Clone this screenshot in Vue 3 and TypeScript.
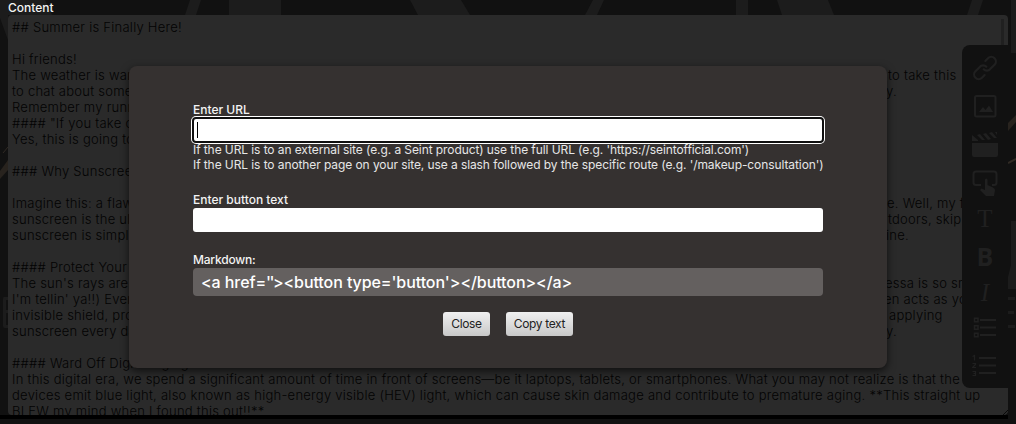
<script setup lang="ts">
interface Row { text: string; tail?: string; at?: number }

const rows: Row[] = [
  { text: '## Summer is Finally Here!' },
  { text: '' },
  { text: 'Hi friends!' },
  { text: 'The weather is warming', tail: 'to take this', at: 876 },
  { text: 'to chat about something', tail: 'y.', at: 874 },
  { text: 'Remember my running' },
  { text: '#### "If you take care' },
  { text: 'Yes, this is going to' },
  { text: '' },
  { text: '### Why Sunscreen' },
  { text: '' },
  { text: 'Imagine this: a flawless', tail: 'e. Well, my f', at: 875 },
  { text: 'sunscreen is the ultimate', tail: 'tdoors, skip', at: 876 },
  { text: 'sunscreen is simply', tail: 'ine.', at: 874 },
  { text: '' },
  { text: '#### Protect Your' },
  { text: "The sun's rays are", tail: 'essa is so sm', at: 873 },
  { text: "I'm tellin' ya!!) Even", tail: 'en acts as yo', at: 872 },
  { text: 'invisible shield, pro', tail: 'applying', at: 877 },
  { text: 'sunscreen every day', tail: 'y.', at: 874 },
  { text: '' },
  { text: '#### Ward Off Digital Aging' },
  { text: 'In this digital era, we spend a significant amount of time in front of screens—be it laptops, tablets, or smartphones. What you may not realize is that the' },
  { text: 'devices emit blue light, also known as high-energy visible (HEV) light, which can cause skin damage and contribute to premature aging. **This straight up' },
  { text: 'BLEW my mind when I found this out!!**' },
]
</script>

<template>
  <main class="page">
    <svg class="backdrop" width="1016" height="424" aria-hidden="true">
      <g fill="#1c1c1c">
        <path d="M0 0H45L52 15H8V40L0 18ZM190 0H201L196 15H185ZM229 0H281V15H229ZM410 0H461L470 15H418ZM593 0H604L597 15H585ZM736 0H748V15H736ZM777 0H828L834 15H782ZM972 0H983L978 15H967ZM1011 0H1016V53H1011Z" />
        <path d="M8 297H4Q3 297 3 299V326Q3 328 5 328H8V325H6V313H8V310H6V300H8Z" />
      </g>
      <path d="M0 171L8 160V170L0 179Z" fill="#28231e" />
      <path d="M3 153L8 147" stroke="#302a24" fill="none" />
      <path d="M0 415H1008V419H0Z" fill="#000" />
    </svg>
    <label class="heading">Content</label>
    <section class="editor">
      <p v-for="(row, i) in rows" :key="i">
        <span class="lead" :style="{ width: row.at ? row.at + 'px' : 'auto' }">{{ row.text }}</span><span v-if="row.tail">{{ row.tail }}</span>
      </p>
      <i class="scrollbar"></i>
      <svg class="grip" width="5" height="5"><path d="M0 5L5 0M3 5L5 3" stroke="#090909" /></svg>
    </section>
    <aside class="tools">
      <svg viewBox="0 0 24 24" width="26" height="26" fill="none" stroke="#202020" stroke-width="2" stroke-linecap="round">
        <path d="M13.2 10.8a4 4 0 0 0-6 .2l-4 4a4 4 0 0 0 6 6l2.500-2.500M10.8 13.2a4 4 0 0 0 6-.2l4-4a4 4 0 0 0-6-6L12.3 5.500" />
      </svg>
      <svg viewBox="0 0 26 26" width="26" height="26"><rect x="3" y="4" width="20.500" height="20.500" rx="1.500" fill="none" stroke="#202020" stroke-width="2" /><path d="M7 20L11 15L13.500 18L17 13.500L21 20Z" fill="#202020" /></svg>
      <svg class="film" viewBox="0 0 26 26" width="26" height="26" fill="#202020"><path d="M0 11H26V23Q26 25 24 25H2Q0 25 0 23ZM0 3L6 8V9H0ZM5 3L8 2L13 8H10ZM11 2L14 1L19 7L16 8ZM17 1L20 0L25 6H22ZM23 0H25V3Z" /></svg>
      <svg class="press" viewBox="0 0 26 26" width="26" height="26"><path d="M9 15H4Q1.500 15 1.500 12.500V4Q1.500 1.500 4 1.500H22Q24.500 1.500 24.500 4V12.500Q24.500 15 22 15H20" fill="none" stroke="#202020" stroke-width="2" /><path d="M13 10Q13 8.500 14.200 8.500T15.500 10V15L21 17.500Q23 18.500 23 20L22 26H14L8 20L9.500 18.500L13 20Z" fill="#202020" /></svg>
      <span class="glyph serif">T</span>
      <span class="glyph bold">B</span>
      <span class="glyph serif italic">I</span>
      <svg viewBox="0 0 26 26" width="26" height="26" fill="#202020"><path d="M8 4H24V6H8ZM8 11.500H24V13.500H8ZM8 19H24V21H8Z" /><path d="M2.500 3.200H6V6.800H2.500ZM2.500 10.700H6V14.300H2.500ZM2.500 18.200H6V21.800H2.500Z" fill="none" stroke="#202020" stroke-width="1.500" /></svg>
      <svg viewBox="0 0 26 26" width="26" height="26" fill="none" stroke="#202020"><path d="M7 5H24M7 12.500H24M7 20H24" stroke-width="2" /><path d="M.5 3.500L2.500 2.500V7.500M.5 10.500H3.500V11.500L.5 14.500H4M.5 18.500H3.500V20.500H1.500M3.500 20.500V22.500H.5" stroke-width="1.200" /></svg>
    </aside>
    <svg class="edge" width="8" height="424" aria-hidden="true">
      <path d="M3 0H8V53H3ZM3 221H8V289H0V277L3 265ZM0 297H7V300H0ZM0 311H6V314H0ZM0 325H7V328H0Z" fill="#1c1c1c" />
      <path d="M0 123L8 115V122L0 131Z" fill="#28231e" />
      <path d="M0 163L8 159" stroke="#302a24" stroke-width="2" />
    </svg>
    <section class="dialog" role="dialog">
      <div class="field">
        <label>Enter URL</label>
        <div class="input focused"><i class="caret"></i></div>
        <p class="hint">If the URL is to an external site (e.g. a Seint product) use the full URL (e.g. 'https://seintofficial.com')<br>If the URL is to another page on your site, use a slash followed by the specific route (e.g. '/makeup-consultation')</p>
      </div>
      <div class="field second">
        <label>Enter button text</label>
        <div class="input"></div>
      </div>
      <div class="field third">
        <label class="tight">Markdown:</label>
        <output>&lt;a href=<span class="quotes">''</span>&gt;&lt;button type='button'&gt;&lt;/button&gt;&lt;/a&gt;</output>
      </div>
      <div class="actions">
        <button type="button" class="close">Close</button>
        <button type="button" class="copy">Copy text</button>
      </div>
    </section>
  </main>
</template>

<style>
body { margin: 0; overflow: hidden; background: #111; }
</style>
<style scoped>
* { box-sizing: border-box; }
.page { position: relative; width: 1016px; height: 424px; overflow: hidden; background: #111; font-family: Inter, "Liberation Sans", sans-serif; }
.backdrop { position: absolute; left: 0; top: 0; }
.edge { position: absolute; right: 0; top: 0; }
.heading { position: relative; display: block; height: 15px; padding-left: 8px; color: #f3f3f3; font-size: 12px; font-weight: 500; line-height: 15px; }
.editor { position: relative; width: 1000px; height: 400px; margin-left: 8px; padding: 4px 4px; overflow: hidden; border-radius: 4px; background: #2a2a2a; color: #030303; font-size: 13px; font-weight: 300; line-height: 16px; letter-spacing: .26px; }
.editor p { display: flex; height: 16px; margin: 0; white-space: pre; }
.lead { flex-shrink: 0; }
.scrollbar { position: absolute; right: 4px; top: 4px; width: 3px; height: 46px; background: #202020; }
.grip { position: absolute; right: 0; bottom: 0; }
.tools { position: absolute; left: 962px; top: 45px; width: 46px; height: 343px; padding: 10px 0 0 10px; display: grid; grid-auto-rows: 37.2px; border-radius: 8px 0 0 8px; background: #111; color: #202020; }
.film { margin-top: 3px; }
.press { margin-top: 3px; }
.glyph { width: 26px; height: 30px; text-align: center; font-size: 25px; line-height: 30px; }
.serif { font-family: "Liberation Serif", serif; }
.bold { font-family: "Open Sans", sans-serif; font-weight: 700; }
.italic { font-style: italic; }
.dialog { position: absolute; left: 129px; top: 66px; width: 758px; height: 302px; padding: 36px 64px 0; border-radius: 8px; background: #353130; color: #f3f3f3; box-shadow: 0 3px 8px rgba(0, 0, 0, .65); font-size: 12px; line-height: 15px; }
.field label { display: block; height: 16px; font-weight: 500; line-height: 16px; }
.field .tight { letter-spacing: -.2px; }
.input { width: 630px; height: 24px; border-radius: 3px; background: #fff; }
.focused { padding: 4px; outline: 2px solid #101010; outline-offset: -1px; box-shadow: 0 0 0 2px #fff; }
.caret { display: block; width: 1px; height: 16px; background: #000; }
.hint { margin: 0; white-space: nowrap; color: #e6e6e6; letter-spacing: -.087px; }
.second { margin-top: 20px; }
.third { margin-top: 20px; }
output { display: block; width: 630px; height: 28px; padding-left: 8px; border-radius: 4px; background: #64605f; color: #fff; font-size: 16px; font-weight: 500; line-height: 28px; letter-spacing: -.08px; white-space: nowrap; }
.quotes { letter-spacing: -1.6px; }
.actions { display: flex; gap: 16px; justify-content: center; margin-top: 16px; }
button { height: 24px; padding: 0; border: 0; border-radius: 3px; background: linear-gradient(#f0f0f0, #c8c8c8); color: #222; font: 12px/24px Inter, sans-serif; letter-spacing: -.35px; }
.close { width: 47px; }
.copy { width: 67px; }
</style>
